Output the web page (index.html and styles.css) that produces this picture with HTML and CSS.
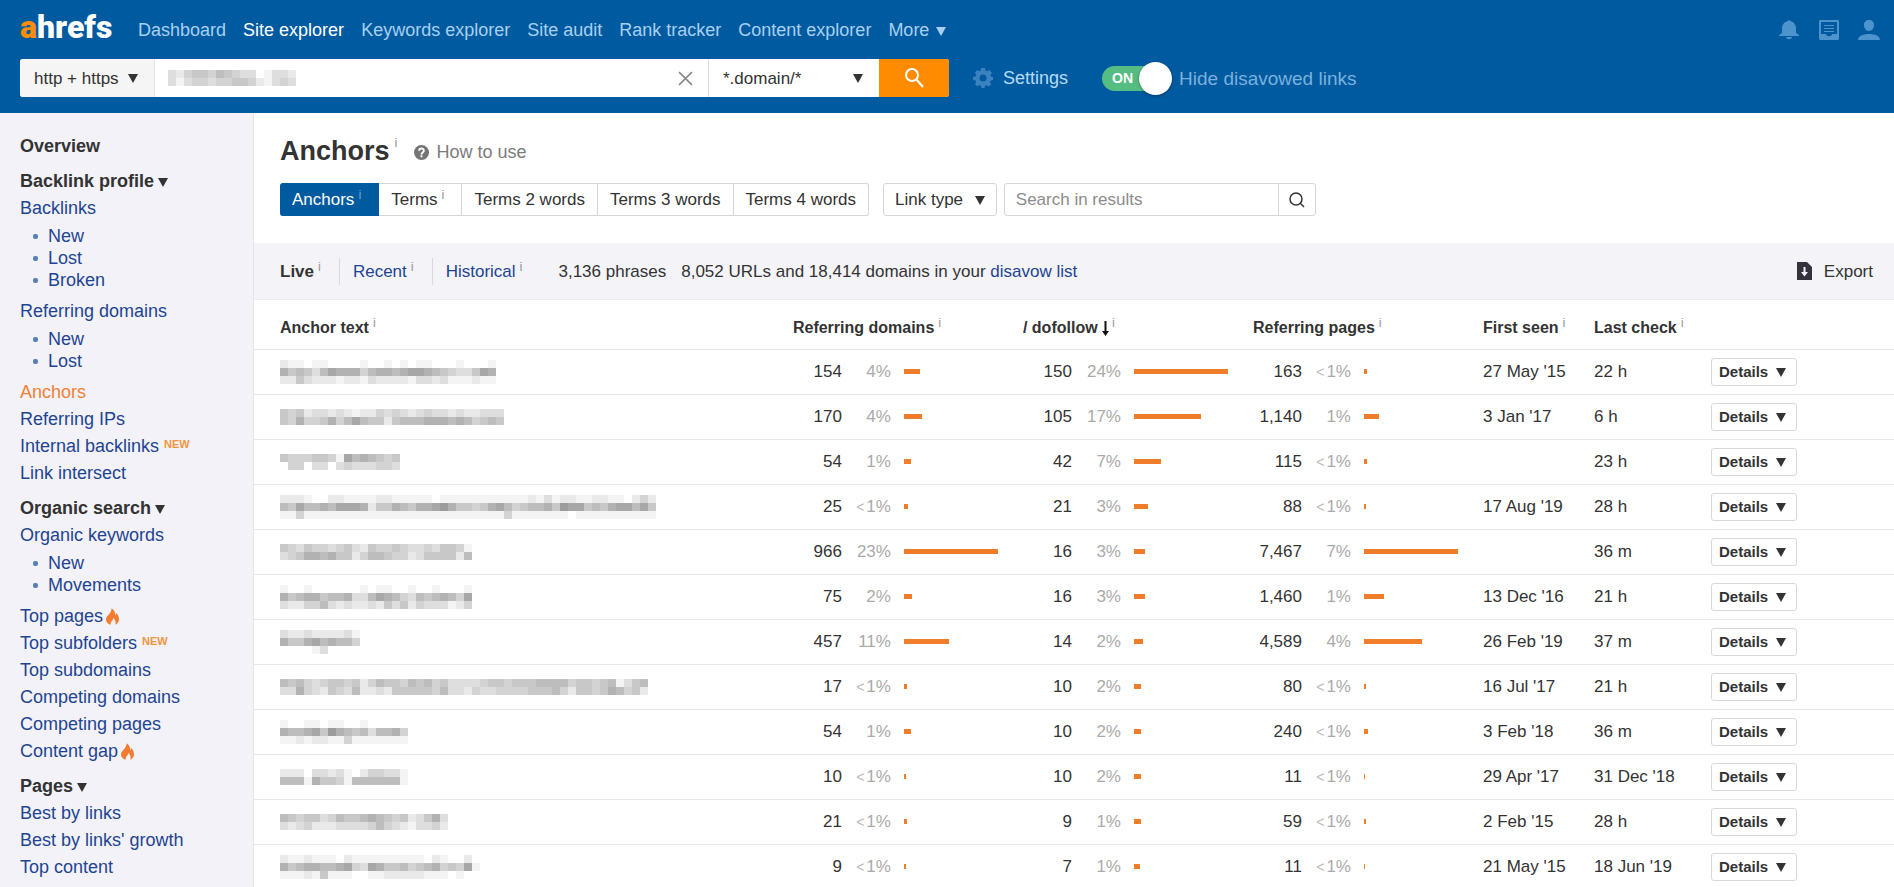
FILE: index.html
```html
<!DOCTYPE html>
<html lang="en">
<head>
<meta charset="utf-8">
<title>Anchors - Site explorer</title>
<link rel="stylesheet" href="styles.css">
</head>
<body>
<svg class="defs" aria-hidden="true">
  <symbol id="caret" viewBox="0 0 10 9"><path d="M0 0h10L5 9z"/></symbol>
  <symbol id="flame" viewBox="0 0 14 18"><path d="M6 0c4 3 4 6 4 8 1-1 1-2 1-3 2 2 3 5 3 7 0 3-2 5-4 6 1-3 0-5-2-8 0 2-1 3-2 4-1 1-1 3-1 4-3-1-5-3-5-6C0 8 6 6 6 0z"/></symbol>
</svg>

<header class="top">
  <div class="top-row">
    <a class="logo" href="#"><span class="logo-a">a</span>hrefs</a>
    <nav class="nav">
      <a href="#">Dashboard</a>
      <a class="current" href="#">Site explorer</a>
      <a href="#">Keywords explorer</a>
      <a href="#">Site audit</a>
      <a href="#">Rank tracker</a>
      <a href="#">Content explorer</a>
      <a href="#">More <svg class="caret"><use href="#caret"/></svg></a>
    </nav>
    <div class="account">
      <button aria-label="Notifications"><svg viewBox="0 0 22 20"><path d="M11 0c1 0 1 1 1 1 4 1 6 4 6 7v5l3 2v1H1v-1l3-2V8c0-3 2-6 6-7 0 0 0-1 1-1zM8 17h6c0 3-6 3-6 0z"/></svg></button>
      <button aria-label="Messages"><svg viewBox="0 0 22 20"><path fill-rule="evenodd" d="M2 0h18l1 1v18l-1 1H2l-1-1V1zM3 2v12h5c0 3 6 3 6 0h5V2zM6 5h10v1H6zm0 3h10v1H6zm0 3h10v1H6z"/></svg></button>
      <button aria-label="Account"><svg viewBox="0 0 22 20"><path d="M11 0c3 0 5 2 5 5s-2 6-5 6-5-3-5-6 2-5 5-5zM0 20c0-4 5-6 11-6s11 2 11 6z"/></svg></button>
    </div>
  </div>
  <div class="search-row">
    <form class="search">
      <div class="select protocol">
        <select aria-label="Protocol"><option>http + https</option></select>
        <svg class="caret"><use href="#caret"/></svg>
      </div>
      <div class="target">
        <span class="mosaic" data-rows="3245546543301332,3134434455421343"></span>
        <input type="text" aria-label="Target">
        <button class="clear" type="button" aria-label="Clear"><svg viewBox="0 0 14 14"><path d="M1 1l12 12M13 1L1 13"/></svg></button>
      </div>
      <div class="select mode">
        <select aria-label="Mode"><option>*.domain/*</option></select>
        <svg class="caret"><use href="#caret"/></svg>
      </div>
      <button class="go" type="button" aria-label="Search"><svg viewBox="0 0 20 20"><circle cx="8" cy="7" r="6"/><path d="M12 11l7 8"/></svg></button>
    </form>
    <button class="settings"><svg viewBox="0 0 20 20"><path fill-rule="evenodd" d="M8 0h4l.5 2.6 1.7.7L16.5 2 19 5l-1.600 2 .5 1.500L20 9v3l-2.300.6-.7 1.600 1.200 2.300-2.700 2-2-1.300-1.500.6L11.500 20h-3L8 17.800l-1.600-.7-2.200 1.300L2 16l1.200-2.100-.6-1.500L0 12V9l2.600-.6.6-1.500L2 4.500 4.300 2l2 1.300 1.400-.6zM10 6.500a3.500 3.500 0 1 0 0 7 3.500 3.500 0 0 0 0-7z"/></svg>Settings</button>
    <label class="toggle"><span class="switch"><input type="checkbox" checked><span class="on">ON</span></span>Hide disavowed links</label>
  </div>
</header>

<div class="body">
  <aside class="side">
    <a class="head" href="#">Overview</a>
    <button class="head">Backlink profile <svg class="caret"><use href="#caret"/></svg></button>
    <a href="#">Backlinks</a>
    <ul><li><a href="#">New</a></li><li><a href="#">Lost</a></li><li><a href="#">Broken</a></li></ul>
    <a href="#">Referring domains</a>
    <ul><li><a href="#">New</a></li><li><a href="#">Lost</a></li></ul>
    <a class="current" href="#">Anchors</a>
    <a href="#">Referring IPs</a>
    <a href="#">Internal backlinks <span class="new">NEW</span></a>
    <a href="#">Link intersect</a>
    <button class="head">Organic search <svg class="caret"><use href="#caret"/></svg></button>
    <a href="#">Organic keywords</a>
    <ul><li><a href="#">New</a></li><li><a href="#">Movements</a></li></ul>
    <a href="#">Top pages <svg class="flame"><use href="#flame"/></svg></a>
    <a href="#">Top subfolders <span class="new">NEW</span></a>
    <a href="#">Top subdomains</a>
    <a href="#">Competing domains</a>
    <a href="#">Competing pages</a>
    <a href="#">Content gap <svg class="flame"><use href="#flame"/></svg></a>
    <button class="head">Pages <svg class="caret"><use href="#caret"/></svg></button>
    <a href="#">Best by links</a>
    <a href="#">Best by links' growth</a>
    <a href="#">Top content</a>
  </aside>

  <main class="main">
    <div class="title">
      <h1>Anchors<sup>i</sup></h1>
      <a class="how" href="#"><svg viewBox="0 0 16 16"><circle cx="8" cy="8" r="8"/><path d="M5.500 6.200C5.500 3 10.500 3 10.500 6c0 2-2.500 1.800-2.500 4M8 11v2"/></svg>How to use</a>
    </div>
    <div class="filters">
      <div class="tabs">
        <button class="active">Anchors<sup>i</sup></button>
        <button class="terms">Terms<sup>i</sup></button>
        <button>Terms 2 words</button>
        <button>Terms 3 words</button>
        <button>Terms 4 words</button>
      </div>
      <button class="box link-type">Link type <svg class="caret"><use href="#caret"/></svg></button>
      <form class="box find">
        <input type="text" placeholder="Search in results" aria-label="Search in results">
        <button type="button" aria-label="Find"><svg viewBox="0 0 16 16"><circle cx="7" cy="7" r="6"/><path d="M11 11l4 4"/></svg></button>
      </form>
    </div>
    <div class="strip">
      <div class="index"><b>Live<sup>i</sup></b><a href="#">Recent<sup>i</sup></a><a href="#">Historical<sup>i</sup></a></div>
      <span class="phrases">3,136 phrases</span>
      <span>8,052 URLs and 18,414 domains in your <a href="#">disavow list</a></span>
      <button class="export"><svg viewBox="0 0 15 18"><path fill-rule="evenodd" d="M0 0h10l5 5v13H0zM6.500 5v5H4l3.500 4.500L11 10H8.500V5z"/></svg>Export</button>
    </div>
    <table>
      <colgroup>
        <col>
        <col class="num"><col class="pct"><col class="bar">
        <col class="num"><col class="pct"><col class="bar">
        <col class="num"><col class="pct"><col class="bar">
        <col class="seen"><col class="check"><col class="more">
      </colgroup>
      <thead>
        <tr>
          <th>Anchor text<sup>i</sup></th>
          <th colspan="3">Referring domains<sup>i</sup></th>
          <th colspan="3">/ dofollow <svg class="sort" viewBox="0 0 7 15"><path d="M2.500 0h2v10H7l-3.500 5L0 10h2.500z"/></svg><sup>i</sup></th>
          <th colspan="3">Referring pages<sup>i</sup></th>
          <th>First seen<sup>i</sup></th>
          <th>Last check<sup>i</sup></th>
          <td></td>
        </tr>
      </thead>
      <tbody id="rows"></tbody>
    </table>
  </main>
</div>
<script src="script.js"></script>
</body>
</html>
```

FILE: styles.css
```css
* { box-sizing: border-box; }
html { scrollbar-width: none; }
body {
  margin: 0;
  font: 18px/27px "Liberation Sans", Arial, sans-serif;
  color: #333;
  background: #fff;
}
a { color: #1f4591; text-decoration: none; }
button, input, select { font: inherit; color: inherit; margin: 0; padding: 0; border: 0; background: none; }
button { cursor: pointer; text-align: left; }
svg { fill: currentColor; flex: none; }
sup { font-size: 13px; font-weight: 400; line-height: 0; vertical-align: 6px; margin-left: 4px; color: #999; }
.defs { position: absolute; width: 0; height: 0; }
.caret { width: 10px; height: 9px; }
.mosaic { display: flex; flex-direction: column; align-items: flex-start; }
.mosaic svg { display: block; }

.top { height: 113px; background: #005a9f; color: #a8d0f2; }
.top-row { display: flex; align-items: center; height: 59px; padding: 0 14px 0 20px; }
.logo { width: 118px; color: #fff; font: 900 32px/40px Roboto, sans-serif; margin-top: -6px; }
.logo-a { color: #ff8c0a; }
.nav { display: flex; gap: 17px; padding-top: 2px; }
.nav a { color: #a8d0f2; white-space: nowrap; }
.nav .current { color: #fff; }
.nav .caret { margin-left: 2px; }
.account { display: flex; gap: 18px; margin-left: auto; color: #4d93cc; }
.account svg { display: block; width: 22px; height: 20px; }
.search-row { display: flex; align-items: center; height: 38px; padding-left: 20px; }
.search { display: flex; width: 929px; height: 38px; background: #fff; border-radius: 3px; overflow: hidden; color: #333; }
.select { position: relative; }
.select select { appearance: none; width: 100%; height: 100%; padding: 0 14px; border-radius: 0; }
.select .caret { position: absolute; right: 16px; top: 15px; pointer-events: none; }
.protocol { width: 135px; background: #f5f5f5; border-right: 1px solid #e3e3e3; font-size: 17px; }
.target { display: flex; align-items: center; flex: 1; padding: 0 15px 0 13px; }
.target input { flex: 1; min-width: 0; height: 38px; outline: 0; }
.clear svg { display: block; width: 15px; height: 15px; stroke: #888; stroke-width: 1.5; }
.mode { width: 171px; border-left: 1px solid #ddd; font-size: 17px; }
.go { display: grid; place-items: center; width: 70px; background: #ff8b00; color: #fff; }
.go svg { width: 20px; height: 20px; fill: none; stroke: #fff; stroke-width: 2; }
.settings { display: flex; align-items: center; gap: 10px; margin-left: 24px; color: #b5daf8; }
.settings svg { width: 20px; height: 20px; color: #3a82c0; }
.toggle { display: flex; align-items: center; gap: 7px; margin-left: 34px; color: #7ab0de; font-size: 19px; }
.switch { position: relative; width: 70px; height: 33px; display: flex; align-items: center; }
.switch input { appearance: none; width: 60px; height: 25px; border-radius: 13px; background: #55bd82; }
.switch input::before {
  content: ""; position: absolute; right: 0; top: 0; width: 33px; height: 33px;
  border-radius: 50%; background: #fff; box-shadow: 0 1px 3px rgba(0, 0, 0, .35);
}
.on { position: absolute; left: 10px; font-size: 14px; font-weight: 700; color: #fff; }

.body { display: flex; min-height: calc(100vh - 113px); }
.side { flex: none; display: flex; flex-direction: column; width: 254px; padding: 20px 0 7px 20px; background: #f2f2f8; border-right: 1px solid #e4e4ec; }
.side a { white-space: nowrap; }
.side .head { font-weight: 700; color: #333; margin-top: 8px; }
.side .head:first-child { margin-top: 0; }
.side .current { color: #f08136; }
.side ul { margin: 0; padding: 3px 0 7px 28px; list-style: none; line-height: 22px; }
.side li { position: relative; }
.side li::before { content: ""; position: absolute; left: -15px; top: 9px; width: 5px; height: 5px; border-radius: 2px; background: #5580b8; }
.side .caret { margin-left: -1px; }
.new { font-size: 11px; font-weight: 700; line-height: 0; vertical-align: 4px; color: #f0953f; }
.flame { width: 13px; height: 17px; margin-left: -2px; vertical-align: -3px; color: #f47b30; }

.main { flex: 1; min-width: 0; font-size: 17px; }
.title { display: flex; align-items: center; gap: 17px; padding: 18px 26px 0; height: 58px; }
h1 { margin: 0; font-size: 27px; line-height: 36px; }
h1 sup { vertical-align: 13px; margin-left: 5px; }
.how { display: flex; align-items: center; gap: 7px; margin-top: 3px; color: #7c7c7c; font-size: 18px; }
.how svg { width: 15px; height: 15px; fill: #757575; }
.how path { fill: none; stroke: #fff; stroke-width: 2; }
.filters { display: flex; padding: 12px 26px 27px; }
.tabs { display: flex; height: 33px; margin-right: 14px; }
.tabs button { padding: 0 12px; border: 1px solid #d6d6d6; border-left: 0; white-space: nowrap; }
.tabs .active { padding-right: 17px; border-color: #005a9f; background: #005a9f; color: #fff; border-radius: 3px 0 0 3px; }
.tabs .active sup { color: #6ba4d4; }
.tabs .terms { padding-right: 17px; }
.tabs button:last-child { border-radius: 0 3px 3px 0; }
.box { height: 33px; border: 1px solid #d6d6d6; border-radius: 3px; }
.link-type { padding: 0 11px; margin-right: 7px; white-space: nowrap; }
.link-type .caret { margin-left: 7px; }
.find { display: flex; width: 312px; }
.find input { flex: 1; min-width: 0; padding-left: 11px; outline: 0; }
.find input::placeholder { color: #8c8c8c; opacity: 1; }
.find button { display: grid; place-items: center; width: 37px; border-left: 1px solid #d6d6d6; }
.find svg { width: 16px; height: 16px; fill: none; stroke: #333; stroke-width: 1.5; }
.strip { display: flex; align-items: center; height: 57px; padding: 0 21px 0 26px; background: #f3f3f8; border-bottom: 1px solid #ececf2; white-space: nowrap; }
.index { display: flex; }
.index > * { padding-right: 18px; }
.index > * + * { padding-left: 13px; border-left: 1px solid #d8d8de; }
.index > :last-child { padding-right: 36px; }
.phrases { margin-right: 15px; }
.export { display: flex; align-items: center; gap: 12px; margin-left: auto; }
.export svg { width: 15px; height: 18px; color: #33333b; }

table { width: 100%; table-layout: fixed; border-collapse: collapse; }
.num { width: 49px; }
.pct { width: 49px; }
.bar { width: 132px; }
.seen { width: 111px; }
.check { width: 117px; }
.more { width: 183px; }
th, td { padding: 0; text-align: left; white-space: nowrap; border-bottom: 1px solid #e8e8e8; }
th { height: 49px; padding-top: 6px; font-size: 16px; }
th:first-child, td:first-child { padding-left: 26px; }
.sort { width: 7px; height: 15px; vertical-align: -3px; color: #111; }
.sort + sup { margin-left: 3px; }
tbody td { height: 45px; }
.n, .p { text-align: right; }
.p { color: #aaa; }
.lt { font-size: 14px; margin-right: 2px; color: #bbb; }
.b { padding-left: 13px; }
.track { width: 94px; height: 5px; }
.fill { height: 5px; background: #f07d2a; }
.details { height: 28px; padding: 0 10px 0 7px; border: 1px solid #d8d8d8; border-radius: 3px; font-size: 15px; line-height: 24px; font-weight: 700; vertical-align: middle; }
.details .caret { margin-left: 4px; }
```

FILE: script.js
```js
const CELL = 8;

// Each digit is one cell, 0 (empty) to 9 (darkest).
function mosaic(rows) {
  const lines = rows.split(",");
  const cols = Math.max(...lines.map((l) => l.length));
  let cells = "";
  lines.forEach((line, y) => [...line].forEach((d, x) => {
    if (d === "0") return;
    const g = 255 - d * 11;
    cells += `<rect x="${x * CELL}" y="${y * CELL}" width="${CELL}" height="${CELL}" fill="rgb(${g},${g},${g})"/>`;
  }));
  return `<svg width="${cols * CELL}" height="${lines.length * CELL}" shape-rendering="crispEdges">${cells}</svg>`;
}

const rows = [
  ["211011000010010101100010001,756536877746776788765433587,225322212213222213323111211", [154, "4"], [150, "24"], [163, "<1"], "27 May '15", "22 h"],
  ["5452332321224343234332322333,5474457468655256667776764565", [170, "4"], [105, "17"], [1140, "1"], "3 Jan '17", "6 h"],
  ["544455418676545,044033034333443", [54, "1"], [42, "7"], [115, "<1"], "", "23 h"],
  ["22210022111122111110111111111112131221122110242,65866768887255765778975545786456675988565788685,11411111111111111111111111114111111101111111111", [25, "<1"], [21, "3"], [88, "<1"], "17 Aug '19", "28 h"],
  ["543544345325445433435541,345776755246654423555526", [966, "23"], [16, "3"], [7467, "7"], "", "36 m"],
  ["100100000010110010010001,756775667336876436567648,322446323223253524333124", [75, "2"], [16, "3"], [1460, "1"], "13 Dec '16", "21 h"],
  ["3223222231,7557867664,0000130000", [457, "11"], [14, "2"], [4589, "4"], "26 Feb '19", "37 m"],
  ["6564345545246554656453333455455566664554561356654683,".slice(0, 46) + ",3374325436223255555463324334444555642554576452", [17, "<1"], [10, "2"], [80, "<1"], "16 Jul '17", "21 h"],
  ["1001101100100000,7667859765636674,1121221141111111", [54, "1"], [10, "2"], [240, "<1"], "3 Feb '18", "36 m"],
  ["2220332310244331,6661755416666661", [10, "<1"], [10, "2"], [11, "<1"], "29 Apr '17", "31 Dec '18"],
  ["654553465567654523573,323422233334643213342", [21, "<1"], [9, "1"], [59, "<1"], "2 Feb '15", "28 h"],
  ["2112111021111111110210020,7567766784387556456745481,1112151110011222221110100", [9, "<1"], [7, "1"], [11, "<1"], "21 May '15", "18 Jun '19"],
];
const max = [966, 150, 7467];

const metric = ([value, pct], i) => {
  const label = pct.startsWith("<") ? `<span class="lt">&lt;</span>${pct.slice(1)}%` : `${pct}%`;
  return `<td class="n">${value.toLocaleString("en-US")}</td><td class="p">${label}</td>
    <td class="b"><div class="track"><div class="fill" style="width:${Math.min(100, 1 + Math.round(100 * value / max[i]))}%"></div></div></td>`;
};

document.getElementById("rows").innerHTML = rows.map(([anchor, domains, follow, pages, seen, check]) => `
  <tr><td><span class="mosaic">${mosaic(anchor)}</span></td>
  ${[domains, follow, pages].map(metric).join("")}
  <td>${seen}</td><td>${check}</td>
  <td><button class="details">Details <svg class="caret"><use href="#caret"/></svg></button></td></tr>`).join("");

document.querySelectorAll("[data-rows]").forEach((el) => { el.innerHTML = mosaic(el.dataset.rows); });
```
